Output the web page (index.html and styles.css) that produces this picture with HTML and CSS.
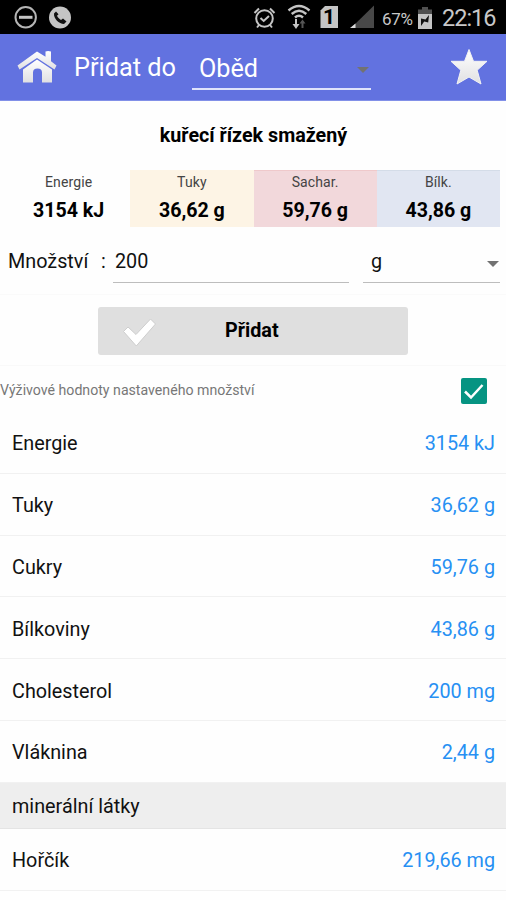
FILE: index.html
```html
<!DOCTYPE html>
<html lang="cs">
<head>
<meta charset="utf-8">
<title>Přidat do</title>
<link rel="stylesheet" href="styles.css">
</head>
<body>
<div class="status">
  <svg class="status-left" width="90" height="34" viewBox="0 0 90 34">
    <circle cx="25.700" cy="17.300" r="10.200" fill="none" stroke="#b5b5b5" stroke-width="2"/>
    <path d="M19 17.300H32.500" stroke="#c4c4c4" stroke-width="3"/>
    <circle cx="60" cy="17.500" r="11" fill="#c4c4c4"/>
    <path d="M56 11.500l-2 2c-.5 5 5 10.500 10 10.500l2.500-2.500-3.500-3-2 1.500c-2-1-3.200-2.500-4-4.200l1.500-1.500z" fill="#111"/>
  </svg>
  <svg class="status-icons" width="124" height="34" viewBox="252 0 124 34">
    <g fill="none" stroke="#c4c4c4" stroke-width="2">
      <circle cx="264.500" cy="18.500" r="8.300"/>
      <path d="M254.500 13l4.500-4.500M270 8.500l4.500 4.500M259 25l-2 2.500M270 25l2 2.500M260.500 18l3.200 3 5.300-5"/>
      <g stroke-width="2.400"><path d="M288.500 10.500Q299 1.500 309.500 10.500M291.700 14Q299 7.500 306.300 14M295 17.500Q299 13.800 303 17.500"/></g>
      <path d="M296 19v6"/>
      <path d="M302.500 28v-7" stroke="#555"/>
    </g>
    <path d="M292.500 24h7l-3.500 5z" fill="#c4c4c4"/>
    <path d="M299.500 23.500h6l-3-4z" fill="#555"/>
    <path d="M325 6h13v22h-17.500V10.500z" fill="#c4c4c4"/>
    <path d="M374 5.500V28h-23z" fill="#484848"/>
    <path d="M355.500 23.500V28H350z" fill="#ddd"/>
  </svg>
  <span class="sim">1</span>
  <span class="pct">67%</span>
  <svg class="battery" width="16" height="24" viewBox="0 0 16 24">
    <path d="M5 1h6v2.500h4V9H1V3.500h4z" fill="#505050"/>
    <path d="M1 8h14v15H1z" fill="#c4c4c4"/>
    <path d="M4 12.500l4.500 1L12 9l-.8 7.500-4-1L4 20z" fill="#111"/>
  </svg>
  <span class="clock">22:16</span>
</div>

<header class="appbar">
  <svg class="home" width="40" height="34" viewBox="0 0 40 34">
    <defs><linearGradient id="metal" x1="0" y1="0" x2="0" y2="1"><stop offset="0" stop-color="#fff"/><stop offset="1" stop-color="#e0e0e2"/></linearGradient></defs>
    <path d="M20 1.500L28.500 6.700V1.500Q31 .5 34 1.500V11.200L39.500 15.500 37.500 19.500 20 8 2.500 19.500.5 15.500z" fill="url(#metal)"/>
    <path d="M20 9.500L35 19.500V32.500H25V22.500Q25 18.500 20.500 18.500T16 22.500V32.500H6V19.500z" fill="url(#metal)"/>
  </svg>
  <h1>Přidat do</h1>
  <div class="meal"><span>Oběd</span><i class="caret"></i></div>
  <svg class="star" width="38" height="38" viewBox="0 0 38 38">
    <path d="M19 1.500l4.500 11.800H37L27.200 22.200 31 36 19 29 7 36 10.800 22.200 1 13.300h13.500z" fill="url(#metal)" stroke="#f2f2f4" stroke-width="1" stroke-linejoin="round"/>
  </svg>
</header>

<h2 class="food">kuřecí řízek smažený</h2>
<section class="tiles">
  <div class="tile"><small>Energie</small><b>3154 kJ</b></div>
  <div class="tile fat"><small>Tuky</small><b>36,62 g</b></div>
  <div class="tile carb"><small>Sachar.</small><b>59,76 g</b></div>
  <div class="tile prot"><small>Bílk.</small><b>43,86 g</b></div>
</section>

<section class="amount">
  <label>Množství</label><span class="colon">:</span>
  <div class="field qty">200</div>
  <div class="field unit"><span>g</span><i class="caret"></i></div>
</section>

<section class="action">
  <div class="button">
    <svg width="36" height="30" viewBox="0 0 36 30"><path d="M1.500 13.500L6 9 14 16.500 28.500 1 33.500 6 14.300 28z" fill="#fff" stroke="#cecece" stroke-width="1"/></svg>
    <span>Přidat</span>
  </div>
</section>

<section class="note">
  <span>Výživové hodnoty nastaveného množství</span>
  <svg width="26" height="26" viewBox="0 0 26 26"><rect width="26" height="26" rx="2" fill="#069482"/><path d="M4 13.500l6 6L21.500 7" fill="none" stroke="#fff" stroke-width="2.500"/></svg>
</section>

<ul class="list">
  <li><span>Energie</span><em>3154 kJ</em></li>
  <li><span>Tuky</span><em>36,62 g</em></li>
  <li><span>Cukry</span><em>59,76 g</em></li>
  <li><span>Bílkoviny</span><em>43,86 g</em></li>
  <li><span>Cholesterol</span><em>200 mg</em></li>
  <li><span>Vláknina</span><em>2,44 g</em></li>
  <li class="group"><span>minerální látky</span></li>
  <li><span>Hořčík</span><em>219,66 mg</em></li>
</ul>
</body>
</html>
```

FILE: styles.css
```css
* { box-sizing: border-box; }
body { margin: 0; width: 506px; height: 900px; overflow: hidden; background: #fefefe; color: #111; font-family: Roboto, "Liberation Sans", sans-serif; font-size: 19.8px; }
svg { display: block; flex: none; }
.status { position: relative; display: flex; align-items: center; height: 34px; background: #000; color: #c8c8c8; }
.status-icons { margin-left: 162px; }
.sim { position: absolute; left: 323px; top: 5px; color: #000; font-size: 21px; line-height: 24px; font-weight: 700; }
.pct { width: 36px; margin-left: 6px; font-size: 17px; padding-top: 3px; letter-spacing: -0.3px; }
.battery { margin: 1px 0 0 -1px; }
.clock { margin-left: 9px; font-size: 23.5px; padding-top: 2px; white-space: nowrap; letter-spacing: -1px; }
.appbar { display: flex; align-items: center; height: 67px; background: #6272e0; border-bottom: 1px solid #8290e8; color: #fff; }
.home { margin-left: 17px; }
h1 { margin: 1px 0 0 17px; width: 118px; font-size: 25.3px; font-weight: 400; white-space: nowrap; }
.meal { display: flex; align-items: center; justify-content: space-between; align-self: flex-start; width: 179px; height: 56px; padding: 14px 0 0 7px; font-size: 25.2px; border-bottom: 2px solid #dfe3fb; }
.caret { width: 0; height: 0; border: 6px solid transparent; border-top-color: #727272; border-bottom: 0; }
.meal .caret { margin-right: 2px; margin-top: 3px; }
.star { margin-left: 79px; }
.food { margin: 0; height: 69px; padding-left: 1px; line-height: 70px; text-align: center; font-size: 19.7px; font-weight: 700; color: #000; }
.tiles { display: grid; grid-template-columns: repeat(4, 1fr); height: 57px; padding: 0 6px 0 7px; }
.tile { display: flex; flex-direction: column; align-items: center; }
.tile small { margin-top: 4px; font-size: 14px; line-height: 17px; color: #444; letter-spacing: .1px; }
.tile b { margin-top: 8px; font-size: 19.6px; line-height: 24px; color: #000; }
.fat { background: #fdf4e5; }
.carb { background: #f2d8db; border-top: 1px solid #efc9cb; }
.prot { background: #e1e6f2; border-top: 1px solid #d4dce8; }
.carb small, .prot small { margin-top: 3px; }
.amount { display: flex; height: 68px; padding-left: 8px; line-height: 70px; border-bottom: 1px solid #fafafa; }
.amount label { width: 93px; }
.colon { width: 12px; }
.field { height: 56px; border-bottom: 1px solid #bdbdbd; }
.qty { width: 236px; padding-left: 2px; }
.unit { display: flex; justify-content: space-between; width: 137px; margin-left: 14px; padding-left: 8px; }
.unit .caret { margin: 34px 1px 0 0; }
.action { height: 71px; padding: 12px 98px 0; border-bottom: 1px solid #f9f9f9; }
.button { display: flex; align-items: center; height: 48px; padding-left: 24px; border-radius: 3px; background: #dfdfdf; font-weight: 700; color: #000; }
.button svg { margin-top: 3px; }
.button span { margin-left: 67px; margin-top: -2px; }
.note { display: flex; align-items: center; justify-content: space-between; height: 46px; padding: 2px 19px 0 0; color: #777; font-size: 14.15px; }
.note svg { margin-top: 1px; }
.note span { margin-top: -1px; }
.list { margin: 0; padding: 0; list-style: none; }
.list li { display: flex; align-items: center; justify-content: space-between; height: 61.800px; padding: 3px 11px 0 12px; border-bottom: 1px solid #f1f1f1; }
.list em { font-style: normal; color: #2790f3; }
.list .group { height: 46px; background: #eee; border-color: #e4e4e4; padding-top: 3px; }
```
